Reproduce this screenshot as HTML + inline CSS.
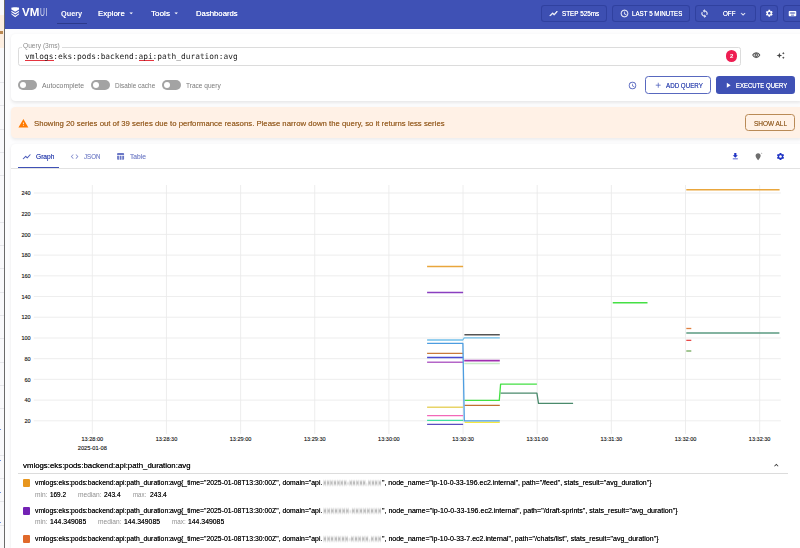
<!DOCTYPE html>
<html lang="en"><head><meta charset="utf-8"><title>vmui</title>
<style>
html,body{margin:0;padding:0;overflow:hidden}
html{width:800px;height:548px}
body{width:800px;height:548px;overflow:hidden;position:relative;background:#fdfdfe;font-family:"Liberation Sans",sans-serif}
.a,.t,.i{position:absolute}
.t{white-space:pre;display:block;transform-origin:0 0}
.i{display:block;overflow:visible}
.card{background:#fff;border-radius:4.5px;box-shadow:.6px 1.1px 3.4px rgba(0,0,0,.085)}
.hb{border:.8px solid rgba(18,28,110,.28);border-radius:3.2px;box-sizing:border-box;top:5px;height:17.3px;background:rgba(30,40,140,.04)}
.sw{width:19px;height:9.5px;border-radius:5px;background:#a3a3a3;top:80.45px}
.sw i{position:absolute;left:1.7px;top:1.7px;width:6px;height:6px;border-radius:50%;background:#fff}
.sq{width:7.9px;height:7.9px;border-radius:1.1px;left:22.5px}
.blur{filter:blur(.9px);color:#7d7d7d;opacity:.8}
.wav{height:1.1px;background:#e5343f;top:60.2px}
</style></head><body>
<div class="a" style="left:0;top:0;width:4px;height:548px;background:#f9f9fb"></div>
<div class="a" style="left:0;top:14.8px;width:4px;height:33.4px;background:#fdeee0"></div>
<div class="a" style="left:0;top:31.4px;width:2.6px;height:2.4px;background:#b9874f"></div>
<div class="a" style="left:0;top:82px;width:4px;height:466px;background:repeating-linear-gradient(180deg,#e6e6ea 0,#e6e6ea .9px,transparent .9px,transparent 23.3px)"></div>
<div class="a" style="left:0;top:429px;width:1px;height:1.4px;background:#6f95e0"></div>
<div class="a" style="left:0;top:460px;width:1px;height:1.4px;background:#6f95e0"></div>
<div class="a" style="left:0;top:492px;width:1px;height:1.4px;background:#6f95e0"></div>
<div class="a" style="left:0;top:522px;width:1px;height:1.4px;background:#6f95e0"></div>
<div class="a" style="left:4px;top:0;width:1px;height:548px;background:#6a6a6a"></div>
<div class="a" style="left:5px;top:0;width:795px;height:28.6px;background:#3f51b5"></div>
<div class="a" style="left:57px;top:23.1px;width:30px;height:1.2px;background:#2b3a8c"></div>
<div class="a hb" style="left:541.1px;width:66.0px"></div>
<div class="a hb" style="left:611.7px;width:78.8px"></div>
<div class="a hb" style="left:695.2px;width:60.4px"></div>
<div class="a hb" style="left:760.2px;width:18.3px"></div>
<div class="a hb" style="left:783.3px;width:16.7px;border-right:0;border-radius:3.2px 0 0 3.2px"></div>
<div class="a card" style="left:11px;top:34.2px;width:789px;height:66.5px;border-radius:4.5px 0 0 4.5px"></div>
<div class="a" style="left:18.4px;top:46.7px;width:722.2px;height:19px;box-sizing:border-box;border:.9px solid #dcdcdc;border-radius:2.4px"></div>
<div class="a" style="left:21.6px;top:44px;width:40px;height:6px;background:#fff"></div>
<div class="a wav" style="left:25.1px;width:29.4px"></div>
<div class="a wav" style="left:138.5px;width:15.1px"></div>
<div class="a" style="left:725.7px;top:50.4px;width:11.3px;height:11.3px;border-radius:50%;background:#ee1d52"></div>
<div class="a sw" style="left:18.1px"><i></i></div>
<div class="a sw" style="left:91.0px"><i></i></div>
<div class="a sw" style="left:161.9px"><i></i></div>
<div class="a" style="left:645px;top:76.1px;width:66.2px;height:17.8px;box-sizing:border-box;border:.9px solid #5868bf;border-radius:3.4px"></div>
<div class="a" style="left:715.6px;top:76.2px;width:79.4px;height:17.6px;background:#3f51b5;border-radius:3.2px"></div>
<div class="a" style="left:11px;top:107.2px;width:789px;height:30.5px;background:#fff1e6;border-radius:4.5px 0 0 4.5px;box-shadow:.6px 1.1px 3.4px rgba(0,0,0,.07)"></div>
<div class="a" style="left:745.3px;top:114px;width:49.4px;height:17.3px;box-sizing:border-box;border:.9px solid #b98a56;border-radius:3.4px"></div>
<div class="a card" style="left:11px;top:144.3px;width:789px;height:403.7px;border-radius:4.5px 0 0 0"></div>
<div class="a" style="left:11px;top:167.6px;width:789px;height:.9px;background:#e2e2e2"></div>
<div class="a" style="left:18.1px;top:166.6px;width:40.9px;height:1.5px;background:#3f51b5"></div>
<svg class="i" style="left:0;top:0" width="800" height="548" viewBox="0 0 800 548">
<g stroke="#eaeaea" stroke-width="0.85" fill="none">
<path d="M33.8 420.81H780.8"/>
<path d="M33.8 400.10H780.8"/>
<path d="M33.8 379.39H780.8"/>
<path d="M33.8 358.68H780.8"/>
<path d="M33.8 337.97H780.8"/>
<path d="M33.8 317.26H780.8"/>
<path d="M33.8 296.55H780.8"/>
<path d="M33.8 275.84H780.8"/>
<path d="M33.8 255.13H780.8"/>
<path d="M33.8 234.42H780.8"/>
<path d="M33.8 213.71H780.8"/>
<path d="M33.8 193.00H780.8"/>
<path d="M92.30 185V434"/>
<path d="M166.45 185V434"/>
<path d="M240.60 185V434"/>
<path d="M314.75 185V434"/>
<path d="M388.90 185V434"/>
<path d="M463.05 185V434"/>
<path d="M537.20 185V434"/>
<path d="M611.35 185V434"/>
<path d="M685.50 185V434"/>
<path d="M759.65 185V434"/>
</g>
<g font-family='"Liberation Sans", sans-serif' font-size="6.2" fill="#111" stroke="#111" stroke-width=".12">
<text transform="translate(30.6 423.01) scale(.89 1)" text-anchor="end">20</text>
<text transform="translate(30.6 402.30) scale(.89 1)" text-anchor="end">40</text>
<text transform="translate(30.6 381.59) scale(.89 1)" text-anchor="end">60</text>
<text transform="translate(30.6 360.88) scale(.89 1)" text-anchor="end">80</text>
<text transform="translate(30.6 340.17) scale(.89 1)" text-anchor="end">100</text>
<text transform="translate(30.6 319.46) scale(.89 1)" text-anchor="end">120</text>
<text transform="translate(30.6 298.75) scale(.89 1)" text-anchor="end">140</text>
<text transform="translate(30.6 278.04) scale(.89 1)" text-anchor="end">160</text>
<text transform="translate(30.6 257.33) scale(.89 1)" text-anchor="end">180</text>
<text transform="translate(30.6 236.62) scale(.89 1)" text-anchor="end">200</text>
<text transform="translate(30.6 215.91) scale(.89 1)" text-anchor="end">220</text>
<text transform="translate(30.6 195.20) scale(.89 1)" text-anchor="end">240</text>
<text transform="translate(92.30 441.3) scale(.9 1)" text-anchor="middle">13:28:00</text>
<text transform="translate(166.45 441.3) scale(.9 1)" text-anchor="middle">13:28:30</text>
<text transform="translate(240.60 441.3) scale(.9 1)" text-anchor="middle">13:29:00</text>
<text transform="translate(314.75 441.3) scale(.9 1)" text-anchor="middle">13:29:30</text>
<text transform="translate(388.90 441.3) scale(.9 1)" text-anchor="middle">13:30:00</text>
<text transform="translate(463.05 441.3) scale(.9 1)" text-anchor="middle">13:30:30</text>
<text transform="translate(537.20 441.3) scale(.9 1)" text-anchor="middle">13:31:00</text>
<text transform="translate(611.35 441.3) scale(.9 1)" text-anchor="middle">13:31:30</text>
<text transform="translate(685.50 441.3) scale(.9 1)" text-anchor="middle">13:32:00</text>
<text transform="translate(759.65 441.3) scale(.9 1)" text-anchor="middle">13:32:30</text>
<text transform="translate(92.30 450) scale(.92 1)" text-anchor="middle">2025-01-08</text>
</g>
<g fill="none" stroke-width="1.3" stroke-linejoin="round">
<path stroke="#e9a63c" d="M427.1 266.5H463.09999999999997"/>
<path stroke="#e9a63c" d="M686.3 189.75H779.6"/>
<path stroke="#8a3fc0" d="M427.1 292.5H463.09999999999997"/>
<path stroke="#555555" d="M464.4 334.75H499.8"/>
<path stroke="#72c0ea" d="M427.1 340H462.79999999999995L464.2 337.9H499.8"/>
<path stroke="#c87a3c" d="M427.1 353.4H463.09999999999997"/>
<path stroke="#4a4ad0" d="M427.1 357.5H463.09999999999997"/>
<path stroke="#b466c8" d="M427.1 362.25H463.09999999999997"/>
<path stroke="#c8ecc8" d="M464.4 363.5H499.8"/>
<path stroke="#a030b0" stroke-width="1.9" d="M464.2 360.6H499.8"/>
<path stroke="#e8d468" d="M427.1 407.25H463.09999999999997"/>
<path stroke="#f268b8" d="M427.1 415.6H463.09999999999997"/>
<path stroke="#3ee0a0" d="M427.1 420.4H463.09999999999997"/>
<path stroke="#5a4cc0" d="M427.1 424.4H463.09999999999997"/>
<path stroke="#c07030" d="M464.6 405.4H499.8"/>
<path stroke="#f4e840" d="M464.6 422.3H499.8"/>
<path stroke="#44e044" d="M464.6 400.4H499.3L500.6 384.1H536.9"/>
<path stroke="#4a8a6c" d="M500.6 393.1H536.9L538.5 403.4H573.1"/>
<path stroke="#4d9de0" d="M427.1 343.4H462.9L464.29999999999995 420.9H499.8"/>
<path stroke="#44e044" d="M612.75 302.75H647.5"/>
<path stroke="#e08040" d="M686.3 328.5H691.3"/>
<path stroke="#5a9a80" d="M686.3 333H779.4"/>
<path stroke="#e84848" d="M686.3 340.35H691.3"/>
<path stroke="#70a858" d="M686.3 351H691.3"/>
</g></svg>
<div class="a" style="left:17.5px;top:472.9px;width:770.6px;height:.9px;background:#dcdcdc"></div>
<div class="a sq" style="top:478.9px;background:#e8961e"></div>
<div class="a sq" style="top:507.1px;background:#7322b4"></div>
<div class="a sq" style="top:535.1px;background:#e0692a"></div>
<svg class="i" style="left:10.90px;top:7.10px" width="8.40" height="10.40" viewBox="0 0 24 29.5" fill="#fff" preserveAspectRatio="none"><path d="M1 2.500C1 .3 23 .3 23 2.500V7L12 13.500 1 7z"/><path d="M1 10.500L12 17l11-6.500v4L12 21 1 14.500z"/><path d="M1 18l11 6.500L23 18v2.500L12 29 1 20.500z"/></svg>
<svg class="i" style="left:126.90px;top:9.30px" width="8.40" height="8.40" viewBox="0 0 24 24" fill="#fff" ><path d="M7 10l5 5 5-5z"/></svg>
<svg class="i" style="left:171.80px;top:9.30px" width="8.40" height="8.40" viewBox="0 0 24 24" fill="#fff" ><path d="M7 10l5 5 5-5z"/></svg>
<svg class="i" style="left:549.30px;top:9.20px" width="9.20" height="9.20" viewBox="0 0 24 24" fill="#fff" stroke="#fff" stroke-width="1.5"><path d="M3.5 18.49l6-6.01 4 4L22 6.92l-1.41-1.41-7.09 7.97-4-4L2 16.99z"/></svg>
<svg class="i" style="left:619.80px;top:9.20px" width="9.00" height="9.00" viewBox="0 0 24 24" fill="#fff" stroke="#fff" stroke-width=".5"><path d="M11.99 2C6.47 2 2 6.48 2 12s4.47 10 9.99 10C17.52 22 22 17.52 22 12S17.52 2 11.99 2zM12 20c-4.42 0-8-3.58-8-8s3.58-8 8-8 8 3.58 8 8-3.58 8-8 8zm.5-13H11v6l5.25 3.15.75-1.23-4.5-2.67z"/></svg>
<svg class="i" style="left:700.40px;top:9.00px" width="9.00" height="9.00" viewBox="0 0 24 24" fill="#fff" stroke="#fff" stroke-width=".7"><path d="M12 4V1L8 5l4 4V6c3.31 0 6 2.69 6 6 0 1.01-.25 1.97-.7 2.8l1.46 1.46C19.54 15.03 20 13.57 20 12c0-4.42-3.58-8-8-8zm0 14c-3.31 0-6-2.69-6-6 0-1.01.25-1.97.7-2.8L5.24 7.74C4.46 8.97 4 10.43 4 12c0 4.42 3.58 8 8 8v3l4-4-4-4v3z"/></svg>
<svg class="i" style="left:738.80px;top:9.60px" width="8.20" height="8.20" viewBox="0 0 24 24" fill="#fff" stroke="#fff" stroke-width=".8"><path d="M7.41 8.59L12 13.17l4.59-4.58L18 10l-6 6-6-6 1.41-1.41z"/></svg>
<svg class="i" style="left:765.00px;top:9.40px" width="8.60" height="8.60" viewBox="0 0 24 24" fill="#fff" ><path d="M19.14 12.94c.04-.3.06-.61.06-.94 0-.32-.02-.64-.07-.94l2.03-1.58c.18-.14.23-.41.12-.61l-1.92-3.32c-.12-.22-.37-.29-.59-.22l-2.39.96c-.5-.38-1.03-.7-1.62-.94l-.36-2.54c-.04-.24-.24-.41-.48-.41h-3.84c-.24 0-.43.17-.47.41l-.36 2.54c-.59.24-1.13.57-1.62.94l-2.39-.96c-.22-.08-.47 0-.59.22L2.74 8.87c-.12.21-.08.47.12.61l2.03 1.58c-.05.3-.09.63-.09.94s.02.64.07.94l-2.03 1.58c-.18.14-.23.41-.12.61l1.92 3.32c.12.22.37.29.59.22l2.39-.96c.5.38 1.03.7 1.62.94l.36 2.54c.05.24.24.41.48.41h3.84c.24 0 .44-.17.47-.41l.36-2.54c.59-.24 1.13-.56 1.62-.94l2.39.96c.22.08.47 0 .59-.22l1.92-3.32c.12-.22.07-.47-.12-.61l-2.01-1.58zM12 15.6c-1.98 0-3.6-1.62-3.6-3.6s1.62-3.6 3.6-3.6 3.6 1.62 3.6 3.6-1.62 3.6-3.6 3.6z"/></svg>
<svg class="i" style="left:788.00px;top:9.20px" width="9.00" height="9.00" viewBox="0 0 24 24" fill="#fff" ><path d="M20 5H4c-1.1 0-1.99.9-1.99 2L2 17c0 1.1.9 2 2 2h16c1.1 0 2-.9 2-2V7c0-1.1-.9-2-2-2zm-9 3h2v2h-2V8zm0 3h2v2h-2v-2zM8 8h2v2H8V8zm0 3h2v2H8v-2zm-1 2H5v-2h2v2zm0-3H5V8h2v2zm9 7H8v-2h8v2zm0-4h-2v-2h2v2zm0-3h-2V8h2v2zm3 3h-2v-2h2v2zm0-3h-2V8h2v2z"/></svg>
<svg class="i" style="left:751.85px;top:50.90px" width="8.50" height="8.50" viewBox="0 0 24 24" fill="#3a3a3a" stroke="#3a3a3a" stroke-width=".5"><path d="M12 6c3.790 0 7.170 2.130 8.820 5.500C19.170 14.870 15.790 17 12 17s-7.170-2.130-8.820-5.500C4.830 8.130 8.210 6 12 6m0-2C7 4 2.730 7.110 1 11.500 2.730 15.890 7 19 12 19s9.270-3.110 11-7.500C21.270 7.110 17 4 12 4zm0 5c1.380 0 2.500 1.120 2.500 2.500S13.380 14 12 14s-2.500-1.120-2.500-2.500S10.620 9 12 9m0-2c-2.480 0-4.500 2.020-4.500 4.500S9.520 16 12 16s4.500-2.020 4.500-4.500S14.480 7 12 7z"/></svg>
<svg class="i" style="left:776.20px;top:50.60px" width="9.00" height="9.00" viewBox="0 0 24 24" fill="#444" ><path d="M9 4.500l2 5.500 5.500 2-5.500 2-2 5.500-2-5.500L1.500 12 7 10z"/><path d="M19.500 2.500l1.100 2.400 2.400 1.100-2.400 1.100-1.100 2.400-1.100-2.400L16 6l2.400-1.100z"/><path d="M19.500 14.500l1.100 2.400 2.400 1.100-2.400 1.100-1.100 2.400-1.100-2.400L16 18l2.400-1.100z"/></svg>
<svg class="i" style="left:627.80px;top:80.80px" width="9.00" height="9.00" viewBox="0 0 24 24" fill="#3f51b5" ><path d="M11.99 2C6.47 2 2 6.48 2 12s4.47 10 9.99 10C17.52 22 22 17.52 22 12S17.52 2 11.99 2zM12 20c-4.42 0-8-3.58-8-8s3.58-8 8-8 8 3.58 8 8-3.58 8-8 8zm.5-13H11v6l5.25 3.15.75-1.23-4.5-2.67z"/></svg>
<svg class="i" style="left:653.80px;top:81.00px" width="8.40" height="8.40" viewBox="0 0 24 24" fill="#4457b8" ><path d="M19 13h-6v6h-2v-6H5v-2h6V5h2v6h6v2z"/></svg>
<svg class="i" style="left:723.50px;top:81.00px" width="8.40" height="8.40" viewBox="0 0 24 24" fill="#fff" ><path d="M8 5v14l11-7z"/></svg>
<svg class="i" style="left:18.20px;top:117.60px" width="10.80" height="10.80" viewBox="0 0 24 24" fill="#ff7a00" ><path d="M1 21h22L12 2 1 21zm12-3h-2v-2h2v2zm0-4h-2v-4h2v4z"/></svg>
<svg class="i" style="left:22.00px;top:152.20px" width="9.40" height="9.40" viewBox="0 0 24 24" fill="#3f51b5" stroke="#3f51b5" stroke-width=".3"><path d="M3.5 18.49l6-6.01 4 4L22 6.92l-1.41-1.41-7.09 7.97-4-4L2 16.99z"/></svg>
<svg class="i" style="left:70.20px;top:152.20px" width="9.20" height="9.20" viewBox="0 0 24 24" fill="#8791cf" ><path d="M9.4 16.6L4.8 12l4.6-4.6L8 6l-6 6 6 6 1.4-1.400zm5.200 0l4.600-4.600-4.600-4.600L16 6l6 6-6 6-1.400-1.400z"/></svg>
<svg class="i" style="left:116.20px;top:152.20px" width="8.80" height="8.80" viewBox="0 0 24 24" fill="#6a77c6" ><path d="M10 10.020h5V21h-5zM17 21h3c1.100 0 2-.9 2-2v-9h-5v11zm3-18H5c-1.100 0-2 .9-2 2v3h19V5c0-1.100-.9-2-2-2zM3 19c0 1.100.9 2 2 2h3V10H3v9z"/></svg>
<svg class="i" style="left:731.40px;top:152.00px" width="8.60" height="8.60" viewBox="0 0 24 24" fill="#1f33c4" ><path d="M19 9h-4V3H9v6H5l7 7 7-7zM5 18v2h14v-2H5z"/></svg>
<svg class="i" style="left:754.00px;top:151.60px" width="9.00" height="9.00" viewBox="0 0 24 24" fill="#6e6e6e" ><path d="M11 3C7.100 3 4.200 5.900 4.200 9.700c0 4.300 5 9.300 6.800 12.300 1.800-3 6.800-8 6.800-12.300C17.800 5.900 14.900 3 11 3z"/><path d="M20.500 1l.7 1.600 1.600.7-1.600.7-.7 1.600-.7-1.600-1.600-.7 1.600-.7z" opacity=".7"/></svg>
<svg class="i" style="left:776.00px;top:152.00px" width="9.00" height="9.00" viewBox="0 0 24 24" fill="#1f33c4" ><path d="M19.14 12.94c.04-.3.06-.61.06-.94 0-.32-.02-.64-.07-.94l2.03-1.58c.18-.14.23-.41.12-.61l-1.92-3.32c-.12-.22-.37-.29-.59-.22l-2.39.96c-.5-.38-1.03-.7-1.62-.94l-.36-2.54c-.04-.24-.24-.41-.48-.41h-3.84c-.24 0-.43.17-.47.41l-.36 2.54c-.59.24-1.13.57-1.62.94l-2.39-.96c-.22-.08-.47 0-.59.22L2.74 8.87c-.12.21-.08.47.12.61l2.03 1.58c-.05.3-.09.63-.09.94s.02.64.07.94l-2.03 1.58c-.18.14-.23.41-.12.61l1.92 3.32c.12.22.37.29.59.22l2.39-.96c.5.38 1.03.7 1.62.94l.36 2.54c.05.24.24.41.48.41h3.84c.24 0 .44-.17.47-.41l.36-2.54c.59-.24 1.13-.56 1.62-.94l2.39.96c.22.08.47 0 .59-.22l1.92-3.32c.12-.22.07-.47-.12-.61l-2.01-1.58zM12 15.6c-1.98 0-3.6-1.62-3.6-3.6s1.62-3.6 3.6-3.6 3.6 1.62 3.6 3.6-1.62 3.6-3.6 3.6z"/></svg>
<svg class="i" style="left:772.20px;top:461.20px" width="8.60" height="8.60" viewBox="0 0 24 24" fill="#333" ><path d="M7.41 15.41L12 10.83l4.59 4.58L18 14l-6-6-6 6z"/></svg>
<span class="t" id="t0" style="left:21.90px;top:7.11px;font:700 10.0px/12.0px 'Liberation Sans', sans-serif;color:#fff;transform:scaleX(1.1600);">VM</span>
<span class="t" id="t1" style="left:40.10px;top:7.11px;font:400 10.0px/12.0px 'Liberation Sans', sans-serif;color:rgba(255,255,255,.8);transform:scaleX(0.6750);letter-spacing:1px;">UI</span>
<span class="t" id="t2" style="left:61.30px;top:8.11px;font:700 7.8px/12.0px 'Liberation Sans', sans-serif;color:#fff;transform:scaleX(0.9403);">Query</span>
<span class="t" id="t3" style="left:98.20px;top:8.11px;font:400 7.8px/12.0px 'Liberation Sans', sans-serif;color:#fff;transform:scaleX(1.0137);text-shadow:0 0 .3px currentColor;">Explore</span>
<span class="t" id="t4" style="left:151.00px;top:8.11px;font:400 7.8px/12.0px 'Liberation Sans', sans-serif;color:#fff;transform:scaleX(1.0438);text-shadow:0 0 .3px currentColor;">Tools</span>
<span class="t" id="t5" style="left:196.00px;top:8.11px;font:400 7.8px/12.0px 'Liberation Sans', sans-serif;color:#fff;transform:scaleX(0.9918);text-shadow:0 0 .3px currentColor;">Dashboards</span>
<span class="t" id="t6" style="left:561.50px;top:8.41px;font:400 6.9px/12.0px 'Liberation Sans', sans-serif;color:#fff;transform:scaleX(0.9189);text-shadow:0 0 .3px currentColor;">STEP 525ms</span>
<span class="t" id="t7" style="left:631.90px;top:8.41px;font:400 6.9px/12.0px 'Liberation Sans', sans-serif;color:#fff;transform:scaleX(0.9017);text-shadow:0 0 .3px currentColor;">LAST 5 MINUTES</span>
<span class="t" id="t8" style="left:722.60px;top:8.41px;font:400 6.9px/12.0px 'Liberation Sans', sans-serif;color:#fff;transform:scaleX(0.9070);text-shadow:0 0 .3px currentColor;">OFF</span>
<span class="t" id="t9" style="left:23.20px;top:40.02px;font:400 6.8px/12.0px 'Liberation Sans', sans-serif;color:#8d8d8d;transform:scaleX(0.9744);">Query (3ms)</span>
<span class="t" id="t10" style="left:25.30px;top:50.51px;font:400 7.84px/12.0px 'DejaVu Sans Mono', 'Liberation Mono', monospace;color:#1d1d1d;transform:scaleX(1.0029);">vmlogs:eks:pods:backend:api:path_duration:avg</span>
<span class="t" id="t11" style="left:729.60px;top:50.30px;font:700 5.6px/12.0px 'Liberation Sans', sans-serif;color:#fff;transform:scaleX(1.0880);">2</span>
<span class="t" id="t12" style="left:41.90px;top:79.80px;font:400 6.9px/12.0px 'Liberation Sans', sans-serif;color:#7a7a7a;transform:scaleX(0.9990);">Autocomplete</span>
<span class="t" id="t13" style="left:115.00px;top:79.80px;font:400 6.9px/12.0px 'Liberation Sans', sans-serif;color:#7a7a7a;transform:scaleX(0.9285);">Disable cache</span>
<span class="t" id="t14" style="left:186.30px;top:79.80px;font:400 6.9px/12.0px 'Liberation Sans', sans-serif;color:#7a7a7a;transform:scaleX(0.9503);">Trace query</span>
<span class="t" id="t15" style="left:665.60px;top:79.71px;font:400 6.9px/12.0px 'Liberation Sans', sans-serif;color:#4457b8;transform:scaleX(0.9034);text-shadow:0 0 .3px currentColor;">ADD QUERY</span>
<span class="t" id="t16" style="left:735.60px;top:79.71px;font:400 6.9px/12.0px 'Liberation Sans', sans-serif;color:#fff;transform:scaleX(0.8718);text-shadow:0 0 .3px currentColor;">EXECUTE QUERY</span>
<span class="t" id="t17" style="left:33.80px;top:118.00px;font:400 7.8px/12.0px 'Liberation Sans', sans-serif;color:#9f6a33;transform:scaleX(0.9966);text-shadow:0 0 .2px #9f6a33;">Showing 20 series out of 39 series due to performance reasons. Please narrow down the query, so it returns less series</span>
<span class="t" id="t18" style="left:753.50px;top:117.80px;font:400 6.9px/12.0px 'Liberation Sans', sans-serif;color:#9c6a35;transform:scaleX(0.9366);text-shadow:0 0 .3px currentColor;">SHOW ALL</span>
<span class="t" id="t19" style="left:36.00px;top:151.00px;font:400 6.9px/12.0px 'Liberation Sans', sans-serif;color:#3f51b5;transform:scaleX(0.9605);text-shadow:0 0 .3px currentColor;">Graph</span>
<span class="t" id="t20" style="left:83.80px;top:151.00px;font:400 6.9px/12.0px 'Liberation Sans', sans-serif;color:#8993d0;transform:scaleX(0.8918);text-shadow:0 0 .3px currentColor;">JSON</span>
<span class="t" id="t21" style="left:130.00px;top:151.00px;font:400 6.9px/12.0px 'Liberation Sans', sans-serif;color:#8993d0;transform:scaleX(0.9706);text-shadow:0 0 .3px currentColor;">Table</span>
<span class="t" id="t22" style="left:22.70px;top:459.61px;font:400 7.8px/12.0px 'Liberation Sans', sans-serif;color:#111;transform:scaleX(1.0037);text-shadow:0 0 .25px #111;">vmlogs:eks:pods:backend:api:path_duration:avg</span>
<span class="t" id="t23" style="left:35.00px;top:476.91px;font:400 6.8px/12.0px 'Liberation Sans', sans-serif;color:#151515;transform:scaleX(1.0042);text-shadow:0 0 .2px #151515;">vmlogs:eks:pods:backend:api:path_duration:avg{_time="2025-01-08T13:30:00Z", domain="api.</span>
<span class="t" id="t24" style="left:382.00px;top:476.91px;font:400 6.8px/12.0px 'Liberation Sans', sans-serif;color:#151515;transform:scaleX(1.0273);text-shadow:0 0 .2px #151515;">", node_name="ip-10-0-33-196.ec2.internal", path="/feed", stats_result="avg_duration"}</span>
<span class="t" id="t25" style="left:35.00px;top:505.16px;font:400 6.8px/12.0px 'Liberation Sans', sans-serif;color:#151515;transform:scaleX(1.0042);text-shadow:0 0 .2px #151515;">vmlogs:eks:pods:backend:api:path_duration:avg{_time="2025-01-08T13:30:00Z", domain="api.</span>
<span class="t" id="t26" style="left:382.00px;top:505.16px;font:400 6.8px/12.0px 'Liberation Sans', sans-serif;color:#151515;transform:scaleX(1.0370);text-shadow:0 0 .2px #151515;">", node_name="ip-10-0-33-196.ec2.internal", path="/draft-sprints", stats_result="avg_duration"}</span>
<span class="t" id="t27" style="left:35.00px;top:533.41px;font:400 6.8px/12.0px 'Liberation Sans', sans-serif;color:#151515;transform:scaleX(1.0042);text-shadow:0 0 .2px #151515;">vmlogs:eks:pods:backend:api:path_duration:avg{_time="2025-01-08T13:30:00Z", domain="api.</span>
<span class="t" id="t28" style="left:382.00px;top:533.41px;font:400 6.8px/12.0px 'Liberation Sans', sans-serif;color:#151515;transform:scaleX(1.0318);text-shadow:0 0 .2px #151515;">", node_name="ip-10-0-33-7.ec2.internal", path="/chats/list", stats_result="avg_duration"}</span>
<span class="t" id="t29" style="left:323.20px;top:476.90px;font:700 7.2px/12.0px 'Liberation Sans', sans-serif;color:#7a7a7a;transform:scaleX(0.8543);filter:blur(.85px);opacity:.8;">xxxxxxx-xxxxx.xxxx</span>
<span class="t" id="t30" style="left:323.20px;top:505.15px;font:700 7.2px/12.0px 'Liberation Sans', sans-serif;color:#7a7a7a;transform:scaleX(0.9365);filter:blur(.85px);opacity:.8;">xxxxxxx-xxxxxxxx</span>
<span class="t" id="t31" style="left:323.20px;top:533.40px;font:700 7.2px/12.0px 'Liberation Sans', sans-serif;color:#7a7a7a;transform:scaleX(0.9074);filter:blur(.85px);opacity:.8;">xxxxxxx-xxxxx.xxx</span>
<span class="t" id="t32" style="left:35.00px;top:488.81px;font:400 6.8px/12.0px 'Liberation Sans', sans-serif;color:#8f8f8f;transform:scaleX(0.9732);">min:</span>
<span class="t" id="t33" style="left:50.20px;top:488.81px;font:400 6.8px/12.0px 'Liberation Sans', sans-serif;color:#151515;transform:scaleX(0.9403);text-shadow:0 0 .2px #151515;">169.2</span>
<span class="t" id="t34" style="left:77.90px;top:488.81px;font:400 6.8px/12.0px 'Liberation Sans', sans-serif;color:#8f8f8f;transform:scaleX(0.9757);">median:</span>
<span class="t" id="t35" style="left:104.10px;top:488.81px;font:400 6.8px/12.0px 'Liberation Sans', sans-serif;color:#151515;transform:scaleX(0.9756);text-shadow:0 0 .2px #151515;">243.4</span>
<span class="t" id="t36" style="left:133.00px;top:488.81px;font:400 6.8px/12.0px 'Liberation Sans', sans-serif;color:#8f8f8f;transform:scaleX(0.8959);">max:</span>
<span class="t" id="t37" style="left:149.50px;top:488.81px;font:400 6.8px/12.0px 'Liberation Sans', sans-serif;color:#151515;transform:scaleX(0.9815);text-shadow:0 0 .2px #151515;">243.4</span>
<span class="t" id="t38" style="left:35.00px;top:516.41px;font:400 6.8px/12.0px 'Liberation Sans', sans-serif;color:#8f8f8f;transform:scaleX(0.9732);">min:</span>
<span class="t" id="t39" style="left:50.20px;top:516.41px;font:400 6.8px/12.0px 'Liberation Sans', sans-serif;color:#151515;transform:scaleX(1.0077);text-shadow:0 0 .2px #151515;">144.349085</span>
<span class="t" id="t40" style="left:98.00px;top:516.41px;font:400 6.8px/12.0px 'Liberation Sans', sans-serif;color:#8f8f8f;transform:scaleX(0.9716);">median:</span>
<span class="t" id="t41" style="left:124.00px;top:516.41px;font:400 6.8px/12.0px 'Liberation Sans', sans-serif;color:#151515;transform:scaleX(1.0022);text-shadow:0 0 .2px #151515;">144.349085</span>
<span class="t" id="t42" style="left:171.80px;top:516.41px;font:400 6.8px/12.0px 'Liberation Sans', sans-serif;color:#8f8f8f;transform:scaleX(0.9298);">max:</span>
<span class="t" id="t43" style="left:188.00px;top:516.41px;font:400 6.8px/12.0px 'Liberation Sans', sans-serif;color:#151515;transform:scaleX(1.0077);text-shadow:0 0 .2px #151515;">144.349085</span>
</body></html>
